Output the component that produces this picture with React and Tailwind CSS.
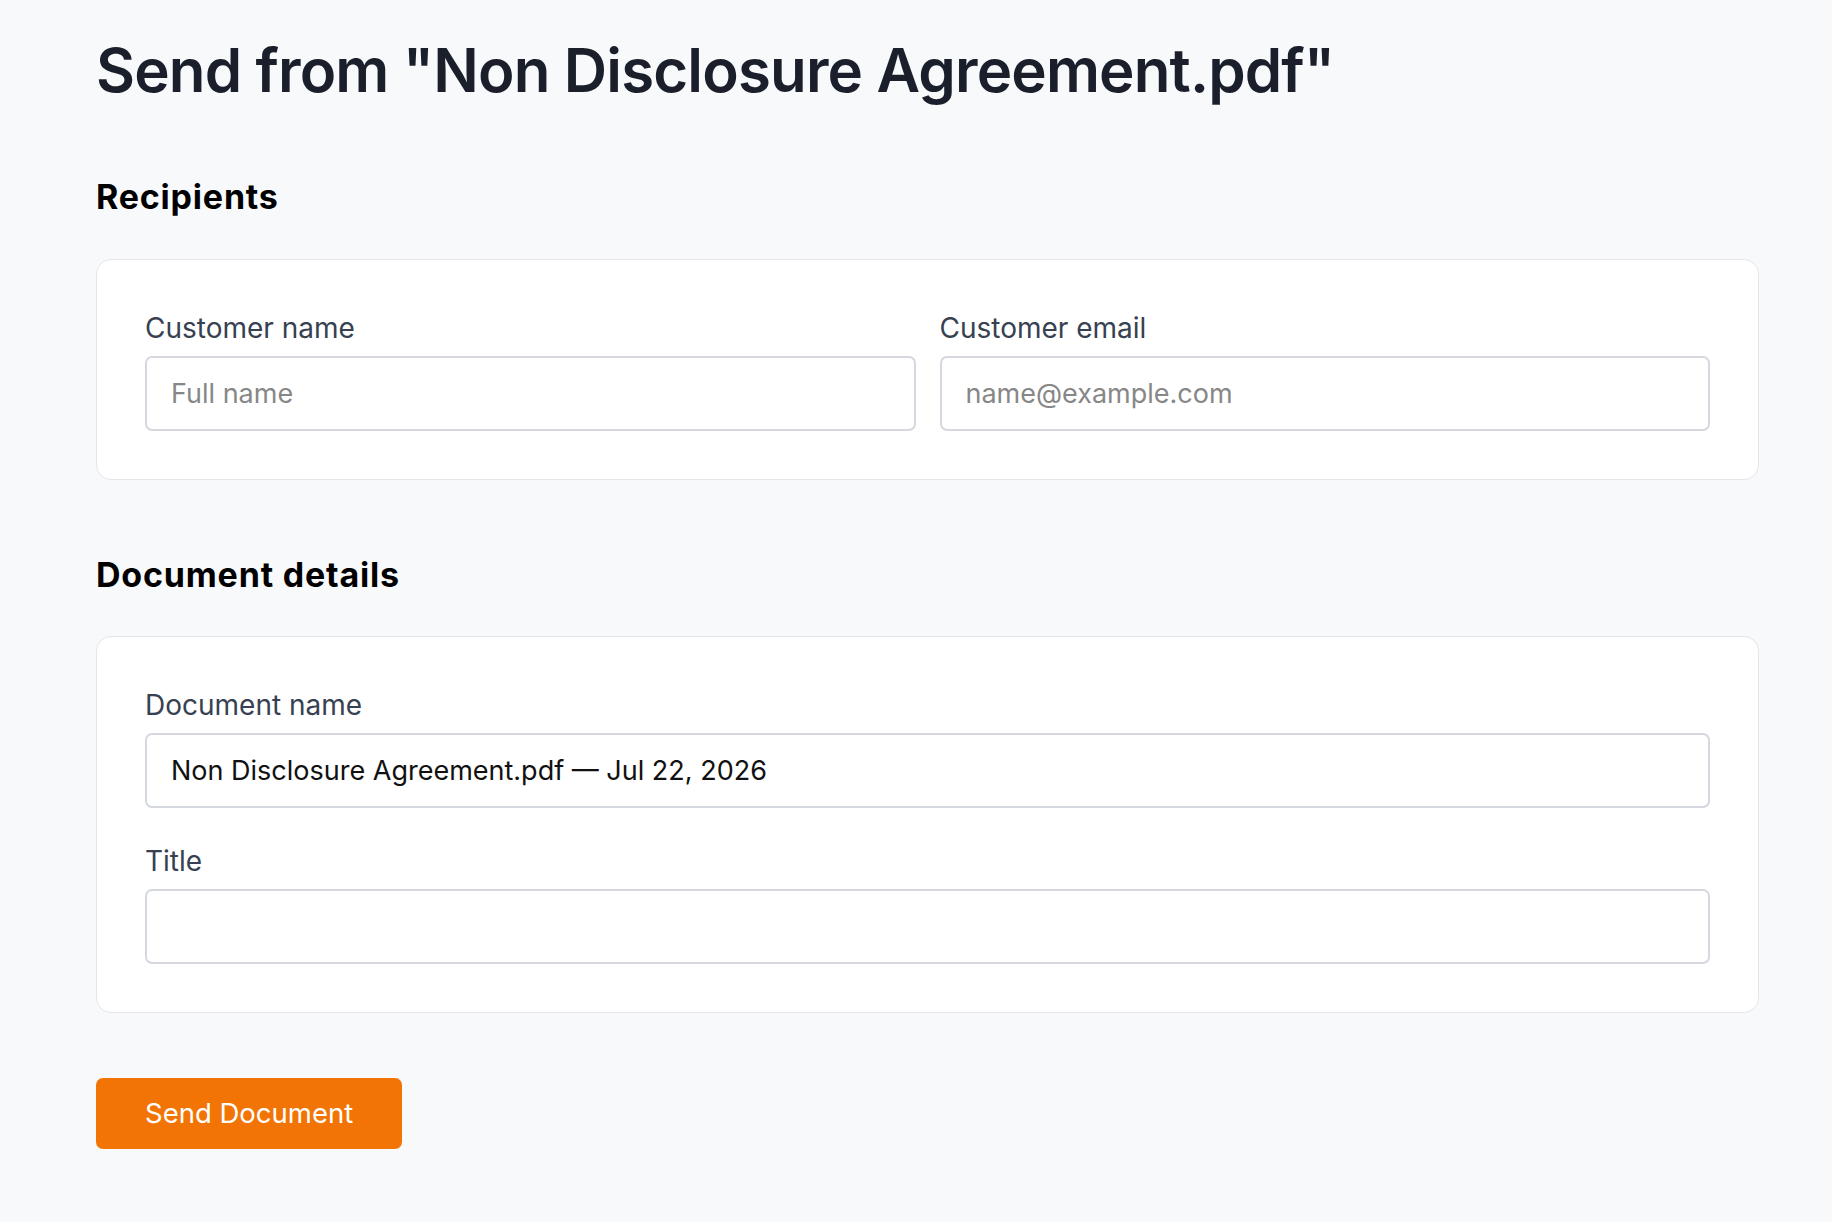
export default function App() {
  const font = { fontFamily: "Inter, 'Noto Sans', sans-serif" };
  const labelCls = "text-[28px] leading-[40px] font-normal text-[#374151]";
  const inputCls =
    "mt-2 h-[75px] rounded-[7px] border-2 border-[#d5d8de] bg-white px-6 text-[27px] text-[#111] placeholder:text-[#878787] outline-none";
  return (
    <div className="min-h-screen bg-[#f8f9fb] pl-24 pr-[73px] pt-[34px] pb-16" style={font}>
      <h1 className="text-[60px] leading-[72px] font-semibold text-[#1a1f2b] tracking-[-0.85px]">
        Send from "Non Disclosure Agreement.pdf"
      </h1>

      <section className="mt-[71px]">
        <h2 className="text-[34px] leading-[40px] font-bold text-black tracking-[0.8px]">Recipients</h2>
        <div className="mt-[42px] rounded-[15px] border border-[#e4e6ea] bg-white p-12">
          <div className="grid grid-cols-2 gap-6">
            <div className="flex flex-col">
              <label className={labelCls}>Customer name</label>
              <input className={inputCls} placeholder="Full name" />
            </div>
            <div className="flex flex-col">
              <label className={labelCls}>Customer email</label>
              <input className={inputCls} placeholder="name@example.com" />
            </div>
          </div>
        </div>
      </section>

      <section className="mt-[75px]">
        <h2 className="text-[34px] leading-[40px] font-bold text-black tracking-[0.8px]">Document details</h2>
        <div className="mt-[41px] rounded-[15px] border border-[#e4e6ea] bg-white p-12">
          <div className="flex flex-col">
            <label className={labelCls}>Document name</label>
            <input className={inputCls} defaultValue="Non Disclosure Agreement.pdf — Jul 22, 2026" />
          </div>
          <div className="mt-[33px] flex flex-col">
            <label className={labelCls}>Title</label>
            <input className={inputCls} />
          </div>
        </div>
      </section>

      <button className="mt-[65px] h-[71px] rounded-[7px] bg-[#f27405] px-[49px] text-[27.5px] font-normal text-white">
        Send Document
      </button>
    </div>
  );
}
